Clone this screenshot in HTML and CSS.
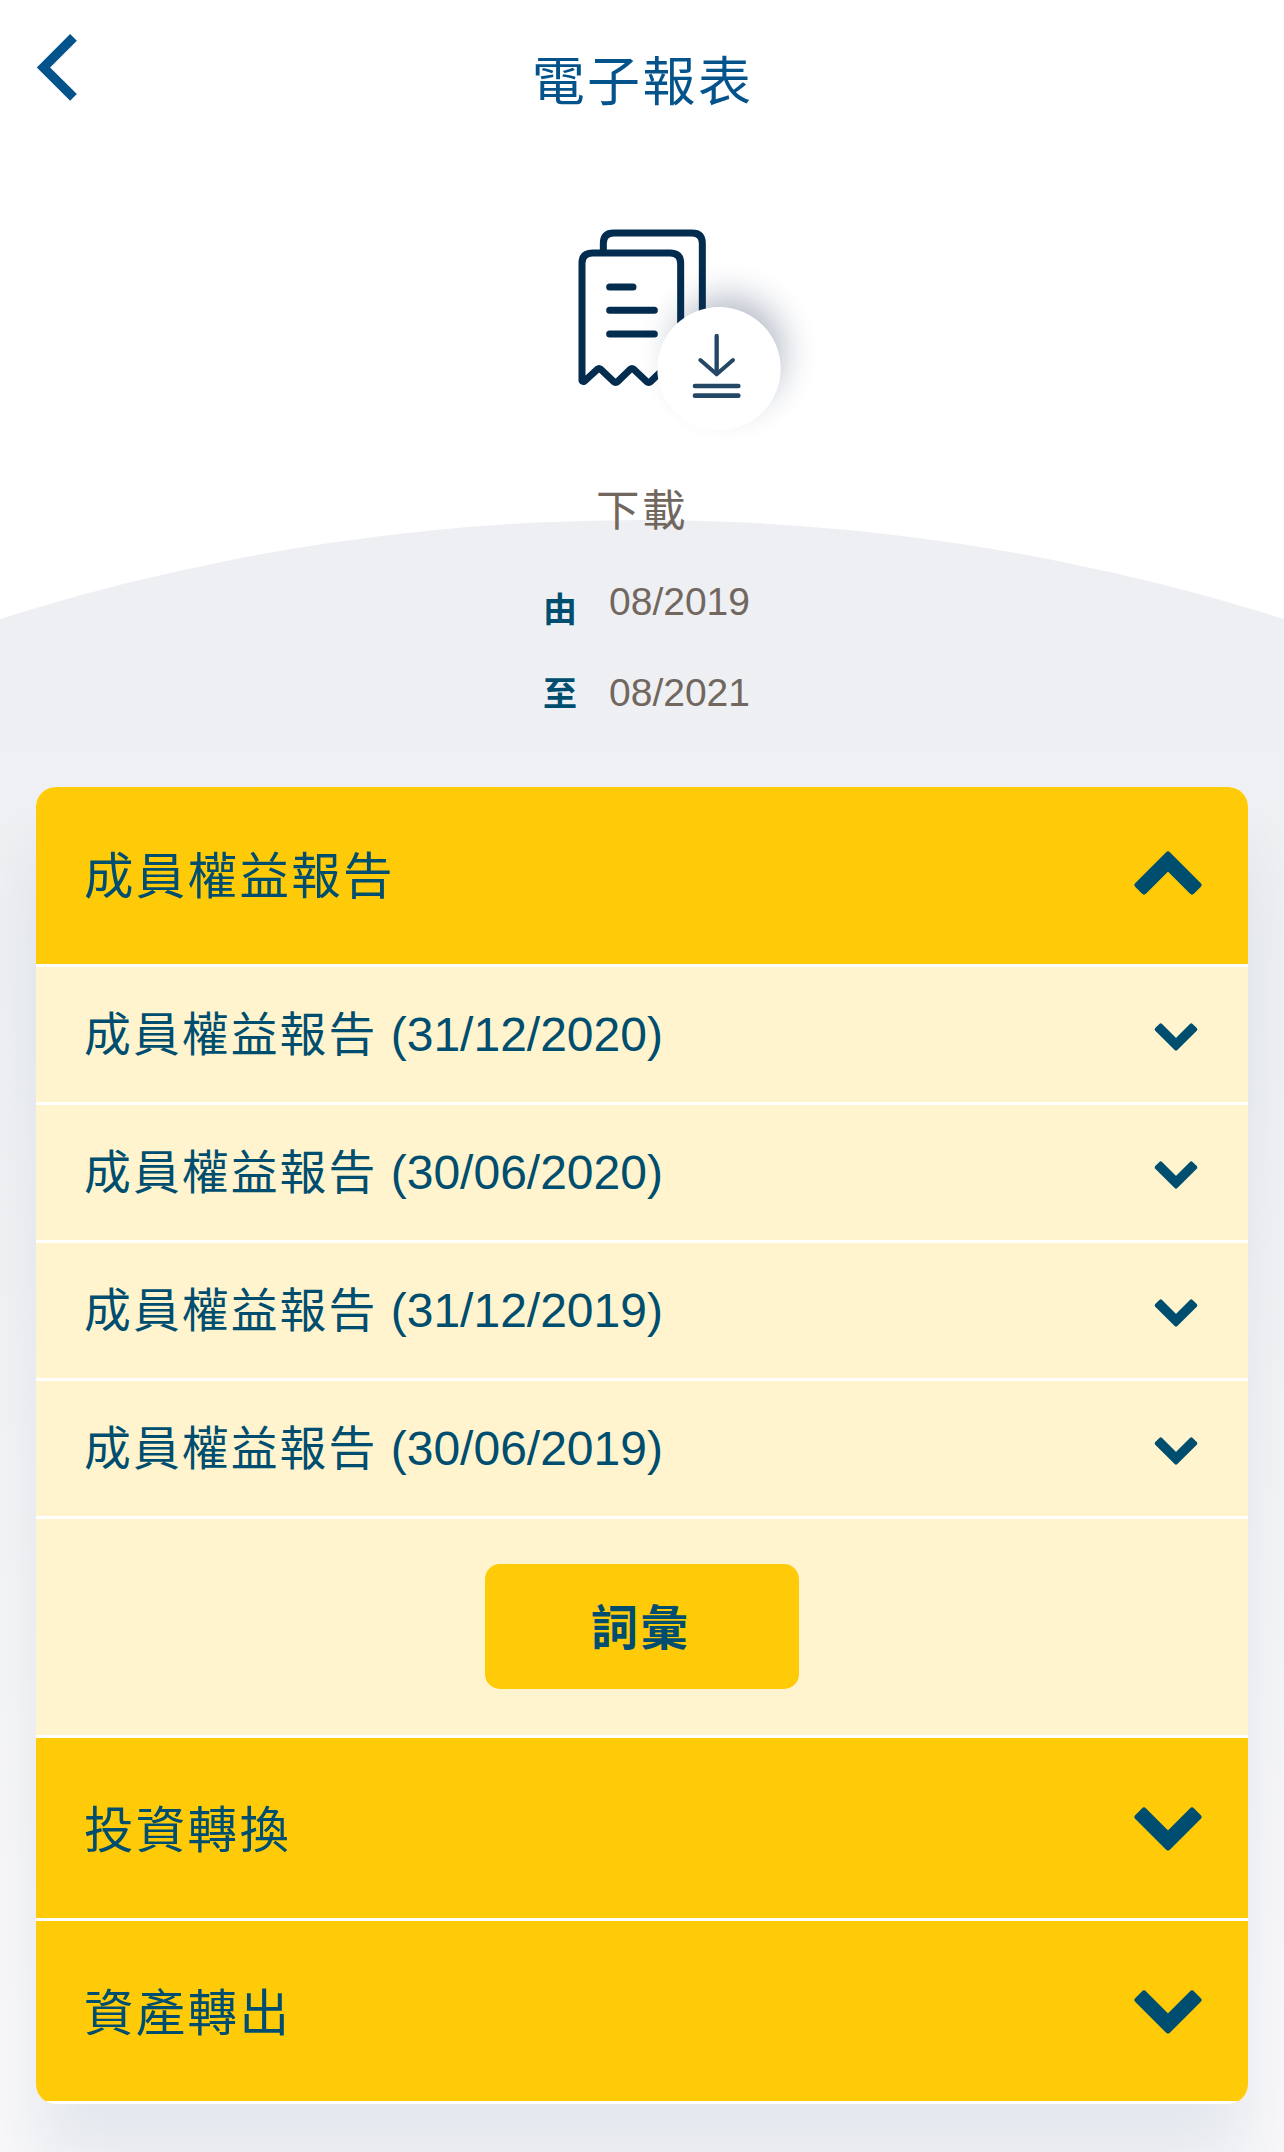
FILE: index.html
```html
<!DOCTYPE html>
<html lang="zh-Hant">
<head>
<meta charset="utf-8">
<title>電子報表</title>
<link rel="stylesheet" href="styles.css">
</head>
<body>
<div class="page">
  <header class="topbar">
    <a class="back" href="#" aria-label="返回">
      <svg width="44" height="72" viewBox="0 0 44 72"><path d="M37.5 5.3 7.5 35.5l30 29.8" fill="none" stroke="#05538b" stroke-width="9.5"/></svg>
    </a>
    <h1 class="title">電子報表</h1>
  </header>

  <section class="hero">
    <svg class="art" width="280" height="250" viewBox="0 0 840 750">
      <defs>
        <filter id="soft" x="-60%" y="-60%" width="220%" height="220%"><feGaussianBlur stdDeviation="52"/></filter>
      </defs>
      <g fill="none" stroke="#032c4f" stroke-width="21" stroke-linecap="round" stroke-linejoin="round">
        <path d="M160 150V130q0-31 31-31H426q31 0 31 31V340" stroke-linecap="butt"/>
        <path d="M392 370V190q0-31-31-31H127q-31 0-31 31V542q2 4 8 1L142 508q5-4 10 0L190 544q7 6 14 0L241 508q5-4 10 0L289 544q7 6 14 0L340 508" stroke-linecap="butt"/>
        <path d="M179 261h70M179 331h134M179 402h134"/>
      </g>
      <circle cx="535" cy="455" r="165" fill="#12294d" opacity=".32" filter="url(#soft)"/>
      <circle cx="507" cy="506" r="185" fill="#fff"/>
      <g fill="none" stroke="#244765" stroke-linecap="round" stroke-linejoin="round">
        <path d="M500 408V520" stroke-width="13"/>
        <path d="M451 480 500 523 549 480" stroke-width="12"/>
        <path d="M435 558H565M435 587H565" stroke-width="14"/>
      </g>
    </svg>
    <p class="download">下載</p>
    <dl class="range">
      <div class="range-row"><dt class="from">由</dt><dd>08/2019</dd></div>
      <div class="range-row"><dt>至</dt><dd>08/2021</dd></div>
    </dl>
  </section>

  <main class="card">
    <div class="group group-first"><span>成員權益報告</span>
      <svg class="chev-lg" viewBox="0 0 68 44"><use href="#up"/></svg></div>
    <div class="item"><span><span class="zh">成員權益報告</span> (31/12/2020)</span><svg class="chev-sm" viewBox="0 0 68 44"><use href="#down"/></svg></div>
    <div class="item"><span><span class="zh">成員權益報告</span> (30/06/2020)</span><svg class="chev-sm" viewBox="0 0 68 44"><use href="#down"/></svg></div>
    <div class="item"><span><span class="zh">成員權益報告</span> (31/12/2019)</span><svg class="chev-sm" viewBox="0 0 68 44"><use href="#down"/></svg></div>
    <div class="item"><span><span class="zh">成員權益報告</span> (30/06/2019)</span><svg class="chev-sm" viewBox="0 0 68 44"><use href="#down"/></svg></div>
    <div class="glossary"><button class="btn" type="button">詞彙</button></div>
    <div class="group"><span>投資轉換</span>
      <svg class="chev-lg" viewBox="0 0 68 44"><use href="#down"/></svg></div>
    <div class="group"><span>資產轉出</span>
      <svg class="chev-lg" viewBox="0 0 68 44"><use href="#down"/></svg></div>
  </main>
</div>
<svg class="symbols" width="0" height="0">
  <symbol id="down" viewBox="0 0 68 44"><path d="M10 3.5 34 27.5 58 3.5 64.5 10 34 40.5 3.5 10Z" fill="#004e6f" stroke="#004e6f" stroke-width="6" stroke-linejoin="round"/></symbol>
  <symbol id="up" viewBox="0 0 68 44"><path d="M10 40.5 34 16.5 58 40.5 64.5 34 34 3.5 3.5 34Z" fill="#004e6f" stroke="#004e6f" stroke-width="6" stroke-linejoin="round"/></symbol>
</svg>
</body>
</html>
```

FILE: styles.css
```css
* { box-sizing: border-box; }
body { margin: 0; background: #fff; }
h1, p, dl, dd, dt { margin: 0; font-weight: 400; }

.page {
  position: relative;
  height: 2152px;
  overflow: hidden;
  font-family: "Liberation Sans", "Noto Sans CJK TC", sans-serif;
  color: #004e6f;
  isolation: isolate;
}
/* large grey dome behind the lower part of the page */
.page::before {
  content: "";
  position: absolute;
  z-index: -1;
  left: calc(50% - 2131px);
  top: 520px;
  width: 4262px;
  height: 4262px;
  border-radius: 50%;
  background: linear-gradient(#eeeff3 0, #eff1f3 500px, #f9f9fa 1500px);
}

.topbar {
  display: grid;
  grid-template-columns: 100px 1fr 100px;
  height: 200px;
}
.back { padding: 32px 0 0 36px; }
.back svg { display: block; }
.title {
  padding: 40px 0 0 1px;
  text-align: center;
  font: 400 53px/76px "Noto Sans CJK TC", sans-serif;
  letter-spacing: 2.4px;
  color: #05538b;
}

.hero {
  display: flex;
  flex-direction: column;
  align-items: center;
  height: 587px;
}
.art { display: block; margin-left: 95px; flex: none; }
.download {
  margin-top: 27px;
  font: 400 43.5px/62px "Noto Sans CJK TC", sans-serif;
  letter-spacing: 2.5px;
  color: #71675e;
}
.range { margin: 33px 0 0 9px; }
.range-row { display: flex; height: 91px; gap: 32px; line-height: 60px; }
.range dt { width: 34px; margin-top: -1px; font: 600 34px/60px "Noto Sans CJK TC", sans-serif; }
.range dt.from { padding-top: 7px; }
.range dd { font-size: 39px; color: #71675e; }

.card {
  margin: 0 36px;
  border-radius: 20px;
  overflow: hidden;
  background: #fff;
  box-shadow: 0 60px 66px rgba(10, 50, 110, .085);
}
.group, .item {
  display: flex;
  align-items: center;
  justify-content: space-between;
  border-bottom: 3px solid #fff;
}
.group {
  height: 183px;
  padding: 0 46px 2px 48px;
  background: #ffcb08;
  font: 400 49.5px/70px "Noto Sans CJK TC", sans-serif;
  letter-spacing: 2.3px;
}
.group-first { height: 180px; padding-bottom: 5px; }
.item {
  height: 138px;
  padding: 0 50px 3px 48px;
  background: #fff4cd;
  font-size: 48px;
  line-height: 70px;
}
.zh { font: 400 46.8px/70px "Noto Sans CJK TC", sans-serif; letter-spacing: 2.1px; }
.chev-lg { width: 68px; height: 44px; }
.group:not(.group-first) .chev-lg { margin-top: 3px; }
.chev-sm { width: 44px; height: 28px; margin-top: 7px; }

.glossary {
  display: flex;
  justify-content: center;
  height: 219px;
  padding-top: 45px;
  background: #fff4cd;
  border-bottom: 3px solid #fff;
}
.btn {
  width: 314px;
  height: 125px;
  padding: 0 3px 4px 0;
  border: 0;
  border-radius: 15px;
  background: #ffcb08;
  color: #004e6f;
  font: 700 47.5px/70px "Noto Sans CJK TC", sans-serif;
  letter-spacing: 2.5px;
}
.symbols { position: absolute; }
```
